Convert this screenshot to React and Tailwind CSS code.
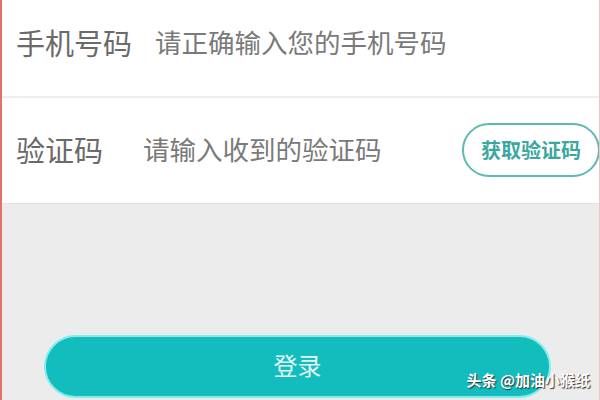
export default function App() {
  const font = { fontFamily: '"Noto Sans CJK SC", "Noto Sans", sans-serif' };
  return (
    <div
      className="relative w-[600px] h-[400px] overflow-hidden bg-[#ebeceb] border-l-2 border-l-[#e36f6f] border-r border-r-[#f3c4c4]"
      style={font}
    >
      <div className="bg-white">
        <div className="flex items-center h-[96px] pl-[14px] pb-[12px]">
          <span className="w-[139px] text-[29px] leading-none text-[#6a6a6a]">手机号码</span>
          <span className="text-[26.5px] leading-none text-[#7a7a7a]">请正确输入您的手机号码</span>
        </div>
        <div className="h-[2px] bg-[#eeeeee]" />
        <div className="flex items-center h-[105px] pl-[14px] pb-[2px]">
          <span className="w-[127px] text-[29px] leading-none text-[#6a6a6a]">验证码</span>
          <span className="flex-1 text-[26.5px] leading-none text-[#7a7a7a]">请输入收到的验证码</span>
          <div className="flex items-center justify-center w-[138px] h-[54px] mr-[-1px] rounded-full border-2 border-[#5db9b1] text-[20px] font-bold text-[#3aa89e] leading-none">
            获取验证码
          </div>
        </div>
      </div>
      <div className="h-[1px] bg-[#e2e3e2]" />
      <div className="flex justify-center pt-[131px] pr-[6px]">
        <div className="flex items-center justify-center w-[507px] h-[63px] rounded-full bg-[#13bcbd] border-2 border-[#86eded] text-[24px] text-[#e3f7f7] leading-none pb-[4px]">
          登录
        </div>
      </div>
      <div className="absolute right-[9px] top-[372px] text-[15px] font-bold text-white leading-none [text-shadow:1px_1px_1px_#333]">
        头条 @加油小猴纸
      </div>
    </div>
  );
}
